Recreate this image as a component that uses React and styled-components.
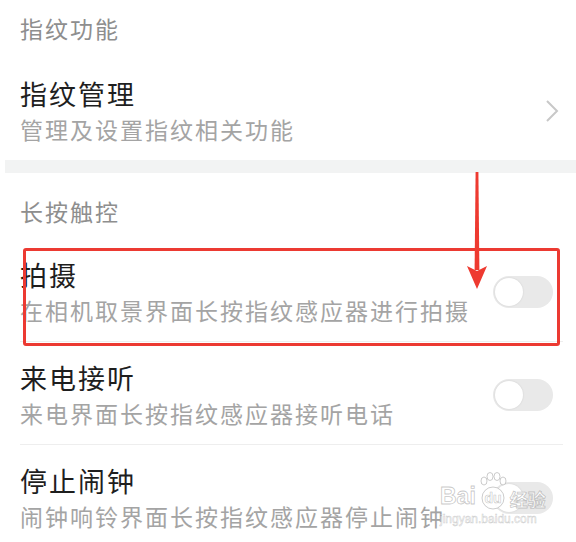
import React from 'react';
import styled, { createGlobalStyle } from 'styled-components';

const GlobalStyle = createGlobalStyle`
  body {
    margin: 0;
    background: #ffffff;
    font-family: 'Noto Sans CJK SC', 'Noto Sans', sans-serif;
  }
`;

const Page = styled.div`
  position: relative;
  width: 576px;
  height: 542px;
  overflow: hidden;
  background: #ffffff;
`;

const SectionTitle = styled.div`
  padding: ${({ $top }) => $top}px 20px ${({ $bottom }) => $bottom}px;
  font-size: 23px;
  line-height: 24px;
  letter-spacing: 2px;
  color: #8e8e8e;
`;

const Row = styled.div`
  position: relative;
  display: flex;
  align-items: center;
  padding: 18px 23px 14px 20px;
`;

const RowText = styled.div`
  flex: 1;
  min-width: 0;
`;

const Title = styled.div`
  font-size: 27px;
  line-height: 36px;
  letter-spacing: 2px;
  color: #1e1e1e;
  white-space: nowrap;
`;

const Subtitle = styled.div`
  font-size: 23px;
  line-height: 34px;
  letter-spacing: 2px;
  color: #a4a4a4;
  white-space: nowrap;
`;

const Divider = styled.div`
  height: 1px;
  margin: 0 13px 0 20px;
  background: #eeeeee;
`;

const Band = styled.div`
  height: 13px;
  margin-left: 5px;
  background: #f2f3f3;
`;

const Chevron = styled.svg`
  width: 14px;
  height: 24px;
  margin-right: -6px;
  flex-shrink: 0;
`;

const Track = styled.div`
  display: flex;
  align-items: center;
  width: 60px;
  height: 32px;
  padding: 0 2px;
  box-sizing: border-box;
  border-radius: 16px;
  background: #e9e9e9;
  flex-shrink: 0;
`;

const Knob = styled.div`
  width: 28px;
  height: 28px;
  border-radius: 50%;
  background: #ffffff;
  box-shadow: 0 0 2px rgba(0, 0, 0, 0.12);
`;

const Highlight = styled.div`
  position: absolute;
  top: 9px;
  left: 23px;
  right: 16px;
  height: 98px;
  border: 3px solid #ec3a32;
  border-radius: 3px;
  box-sizing: border-box;
  pointer-events: none;
`;

const Arrow = styled.svg`
  position: absolute;
  left: 464px;
  top: 172px;
  width: 28px;
  height: 120px;
`;

const Watermark = styled.div`
  position: absolute;
  left: 440px;
  top: 472px;
  display: flex;
  flex-direction: column;
  align-items: flex-start;
  pointer-events: none;
`;

const MarkLine = styled.div`
  display: flex;
  align-items: flex-end;
  gap: 2px;
`;

const MarkText = styled.span`
  font-family: ${({ $cjk }) => ($cjk ? "'Noto Sans CJK SC', sans-serif" : "'Liberation Sans', Arial, sans-serif")};
  font-size: ${({ $size }) => $size}px;
  font-weight: 700;
  line-height: 1;
  color: rgba(255, 255, 255, 0.9);
  -webkit-text-stroke: 0.8px rgba(150, 150, 150, 0.55);
`;

const MarkUrl = styled.span`
  margin-top: 5px;
  font-family: 'Liberation Sans', Arial, sans-serif;
  font-size: 12px;
  line-height: 12px;
  color: rgba(255, 255, 255, 0.9);
  -webkit-text-stroke: 0.5px rgba(150, 150, 150, 0.5);
`;

const Paw = styled.svg`
  width: 30px;
  height: 38px;
  margin-bottom: -2px;
`;

const Switch = () => (
  <Track>
    <Knob />
  </Track>
);

const Item = ({ title, desc, children }) => (
  <Row>
    <RowText>
      <Title>{title}</Title>
      <Subtitle>{desc}</Subtitle>
    </RowText>
    {children}
  </Row>
);

const App = () => {
  return (
    <>
      <GlobalStyle />
      <Page>
        <SectionTitle $top={16} $bottom={18}>指纹功能</SectionTitle>
        <Item title="指纹管理" desc="管理及设置指纹相关功能">
          <Chevron viewBox="0 0 14 24">
            <path d="M2 2 L12 12 L2 22" fill="none" stroke="#c8c8c8" strokeWidth="2" />
          </Chevron>
        </Item>
        <Band />

        <SectionTitle $top={26} $bottom={16}>长按触控</SectionTitle>
        <Row>
          <RowText>
            <Title>拍摄</Title>
            <Subtitle>在相机取景界面长按指纹感应器进行拍摄</Subtitle>
          </RowText>
          <Switch />
          <Highlight />
        </Row>
        <Divider />
        <Item title="来电接听" desc="来电界面长按指纹感应器接听电话">
          <Switch />
        </Item>
        <Divider />
        <Item title="停止闹钟" desc="闹钟响铃界面长按指纹感应器停止闹钟">
          <Switch />
        </Item>

        <Arrow viewBox="0 0 28 120">
          <polygon points="11.6,0 14.4,0 15.4,98 10.6,98" fill="#ee3a30" />
          <polygon points="3,94 13,99 23,94 13,117" fill="#ee3a30" />
        </Arrow>

        <Watermark>
          <MarkLine>
            <MarkText $size={23}>Bai</MarkText>
            <Paw viewBox="0 0 30 38">
              <g fill="rgba(255,255,255,0.9)" stroke="rgba(150,150,150,0.55)" strokeWidth="0.9">
                <ellipse cx="6" cy="9" rx="3" ry="4" />
                <ellipse cx="12" cy="4.5" rx="3" ry="4" />
                <ellipse cx="19" cy="4.5" rx="3" ry="4" />
                <ellipse cx="25" cy="9" rx="3" ry="4" />
                <circle cx="15" cy="26" r="11" />
              </g>
              <text
                x="15"
                y="31"
                textAnchor="middle"
                fontFamily="'Liberation Sans', Arial, sans-serif"
                fontSize="14"
                fontWeight="700"
                fill="rgba(255,255,255,0.95)"
                stroke="rgba(150,150,150,0.55)"
                strokeWidth="0.6"
              >
                du
              </text>
            </Paw>
            <MarkText $size={18} $cjk>经验</MarkText>
          </MarkLine>
          <MarkUrl>jingyan.baidu.com</MarkUrl>
        </Watermark>
      </Page>
    </>
  );
};

export default App;
